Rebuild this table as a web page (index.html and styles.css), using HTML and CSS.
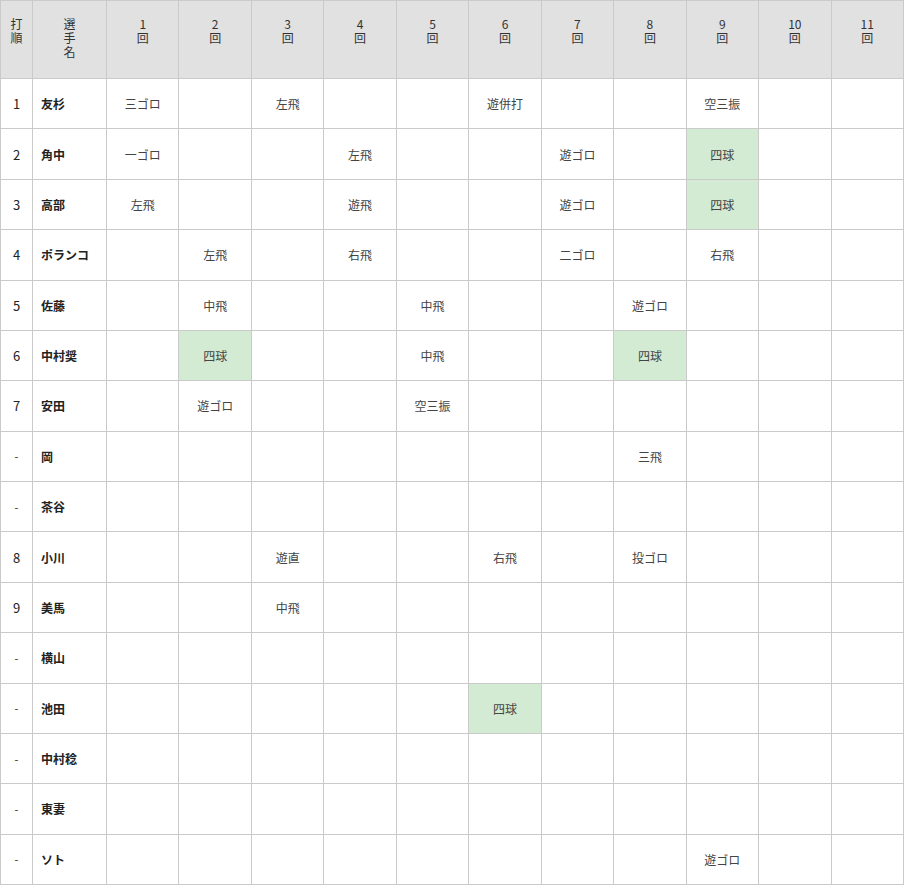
FILE: index.html
```html
<!DOCTYPE html>
<html lang="ja">
<head>
<meta charset="utf-8">
<link rel="stylesheet" href="styles.css">
</head>
<body>
<table class="score">
<colgroup>
<col class="c-order"><col class="c-name">
<col><col><col><col><col><col><col><col><col><col><col>
</colgroup>
<thead>
<tr>
<th>打<br>順</th><th>選<br>手<br>名</th>
<th>1<br>回</th><th>2<br>回</th><th>3<br>回</th><th>4<br>回</th><th>5<br>回</th><th>6<br>回</th><th>7<br>回</th><th>8<br>回</th><th>9<br>回</th><th>10<br>回</th><th>11<br>回</th>
</tr>
</thead>
<tbody>
<tr><td class="ord">1</td><td class="name">友杉</td><td>三ゴロ</td><td></td><td>左飛</td><td></td><td></td><td>遊併打</td><td></td><td></td><td>空三振</td><td></td><td></td></tr>
<tr><td class="ord">2</td><td class="name">角中</td><td>一ゴロ</td><td></td><td></td><td>左飛</td><td></td><td></td><td>遊ゴロ</td><td></td><td class="walk">四球</td><td></td><td></td></tr>
<tr><td class="ord">3</td><td class="name">高部</td><td>左飛</td><td></td><td></td><td>遊飛</td><td></td><td></td><td>遊ゴロ</td><td></td><td class="walk">四球</td><td></td><td></td></tr>
<tr><td class="ord">4</td><td class="name">ポランコ</td><td></td><td>左飛</td><td></td><td>右飛</td><td></td><td></td><td>二ゴロ</td><td></td><td>右飛</td><td></td><td></td></tr>
<tr><td class="ord">5</td><td class="name">佐藤</td><td></td><td>中飛</td><td></td><td></td><td>中飛</td><td></td><td></td><td>遊ゴロ</td><td></td><td></td><td></td></tr>
<tr><td class="ord">6</td><td class="name">中村奨</td><td></td><td class="walk">四球</td><td></td><td></td><td>中飛</td><td></td><td></td><td class="walk">四球</td><td></td><td></td><td></td></tr>
<tr><td class="ord">7</td><td class="name">安田</td><td></td><td>遊ゴロ</td><td></td><td></td><td>空三振</td><td></td><td></td><td></td><td></td><td></td><td></td></tr>
<tr><td class="ord dash">-</td><td class="name">岡</td><td></td><td></td><td></td><td></td><td></td><td></td><td></td><td>三飛</td><td></td><td></td><td></td></tr>
<tr><td class="ord dash">-</td><td class="name">茶谷</td><td></td><td></td><td></td><td></td><td></td><td></td><td></td><td></td><td></td><td></td><td></td></tr>
<tr><td class="ord">8</td><td class="name">小川</td><td></td><td></td><td>遊直</td><td></td><td></td><td>右飛</td><td></td><td>投ゴロ</td><td></td><td></td><td></td></tr>
<tr><td class="ord">9</td><td class="name">美馬</td><td></td><td></td><td>中飛</td><td></td><td></td><td></td><td></td><td></td><td></td><td></td><td></td></tr>
<tr><td class="ord dash">-</td><td class="name">横山</td><td></td><td></td><td></td><td></td><td></td><td></td><td></td><td></td><td></td><td></td><td></td></tr>
<tr><td class="ord dash">-</td><td class="name">池田</td><td></td><td></td><td></td><td></td><td></td><td class="walk">四球</td><td></td><td></td><td></td><td></td><td></td></tr>
<tr><td class="ord dash">-</td><td class="name">中村稔</td><td></td><td></td><td></td><td></td><td></td><td></td><td></td><td></td><td></td><td></td><td></td></tr>
<tr><td class="ord dash">-</td><td class="name">東妻</td><td></td><td></td><td></td><td></td><td></td><td></td><td></td><td></td><td></td><td></td><td></td></tr>
<tr><td class="ord dash">-</td><td class="name">ソト</td><td></td><td></td><td></td><td></td><td></td><td></td><td></td><td></td><td>遊ゴロ</td><td></td><td></td></tr>
</tbody>
</table>
</body>
</html>
```

FILE: styles.css
```css
html, body {
  margin: 0;
  padding: 0;
  background: #ffffff;
}

body {
  font-family: "Noto Sans CJK JP", "Noto Sans", sans-serif;
  color: #333333;
}

.score {
  width: 904px;
  height: 885px;
  border-collapse: collapse;
  table-layout: fixed;
  font-size: 12px;
}

.c-order { width: 32px; }
.c-name { width: 74px; }

.score th,
.score td {
  border: 1px solid #cacaca;
  padding: 0;
}

.score thead tr {
  height: 78px;
}

.score th {
  background: #e1e1e1;
  font-weight: normal;
  font-size: 12px;
  line-height: 14px;
  vertical-align: top;
  padding-top: 16px;
  text-align: center;
  color: #333333;
}

.score tbody tr {
  height: 50px;
}

.score td {
  text-align: center;
  vertical-align: middle;
  color: #444444;
}

.score td.ord {
  color: #222222;
  font-size: 13px;
}

.score td.dash {
  font-size: 11px;
}

.score td.name {
  text-align: left;
  padding-left: 8px;
  font-weight: bold;
  color: #222222;
}

.score td.walk {
  background: #d3ead3;
}
```
